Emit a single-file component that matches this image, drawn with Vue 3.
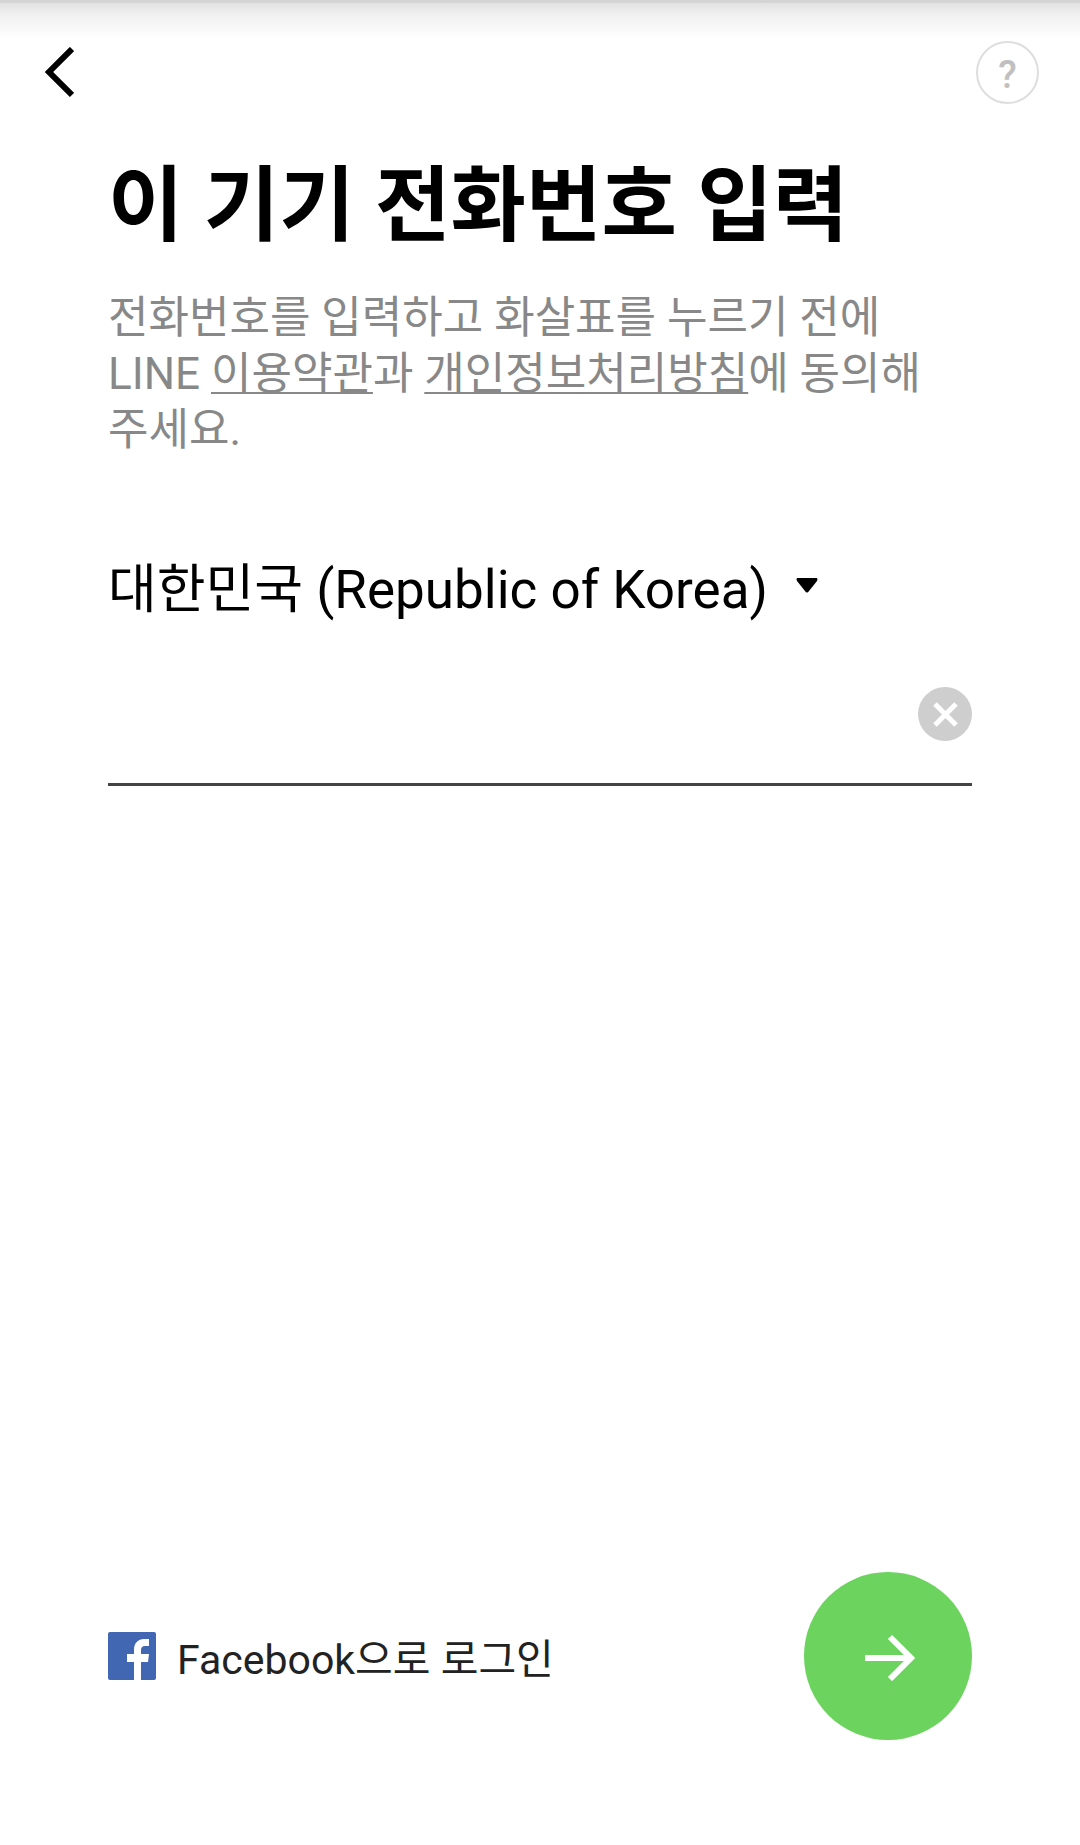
<script setup>
import { ref } from 'vue'

const country = ref('KR')
const phone = ref('')
</script>

<template>
  <div class="page">
    <header class="top">
      <button class="plain" type="button" aria-label="뒤로">
        <svg width="30" height="52" viewBox="0 0 30 52" fill="none" stroke="#000" stroke-width="6">
          <path d="M28 2 L5 25 L28 48" />
        </svg>
      </button>
      <button class="help" type="button" aria-label="도움말">?</button>
    </header>

    <main class="content">
      <h1>이 기기 전화번호 입력</h1>
      <p class="intro">
        전화번호를 입력하고 화살표를 누르기 전에 LINE
        <a href="#terms">이용약관</a>과 <a href="#privacy">개인정보처리방침</a>에 동의해 주세요.
      </p>

      <label class="country">
        <select v-model="country" aria-label="국가">
          <option value="KR">대한민국 (Republic of Korea)</option>
        </select>
        <svg width="22" height="24" viewBox="0 0 22 24" aria-hidden="true">
          <path d="M1 0 H21 Q22 1 21 3 L13 13 Q11 16 9 13 L1 3 Q0 1 1 0 Z" />
        </svg>
      </label>

      <div class="field">
        <input v-model="phone" type="tel" aria-label="전화번호" />
        <button class="plain" type="button" aria-label="지우기" @click="phone = ''">
          <svg width="54" height="54" viewBox="0 0 54 54">
            <circle cx="27" cy="27" r="27" fill="#cecece" />
            <path d="M17 17 L38 38 M38 17 L17 38" stroke="#fff" stroke-width="5" />
          </svg>
        </button>
      </div>
    </main>

    <footer class="bottom">
      <a class="facebook" href="#facebook">
        <svg width="48" height="48" viewBox="0 0 48 48" aria-hidden="true">
          <rect width="48" height="48" rx="2" fill="#4267b2" />
          <path
            d="M26 48 V30 H19 V22 H26 V18 C26 11 30 7 36 7 H41 V14 H37 C34 14 33 16 33 18 V22 H41 L40 30 H33 V48 Z"
            fill="#fff"
          />
        </svg>
        <span>Facebook으로 로그인</span>
      </a>
      <button class="next" type="button" aria-label="다음">
        <svg width="54" height="50" viewBox="0 0 54 50" fill="none" stroke="#fff" stroke-width="6">
          <path d="M4 27 H49 M29 6 L50 27 L29 48" />
        </svg>
      </button>
    </footer>
  </div>
</template>

<style>
body {
  margin: 0;
  background: #fff;
}
</style>

<style scoped>
.page {
  box-sizing: border-box;
  min-height: 100vh;
  display: flex;
  flex-direction: column;
  border-top: 3px solid #d4d4d4;
  background: linear-gradient(#e2e2e2, #f0f0f0 12px, #fff 36px) no-repeat #fff;
  font-family: Roboto, "Noto Sans CJK KR", sans-serif;
  color: #000;
  word-break: keep-all;
}

button {
  padding: 0;
  border: 0;
  background: none;
  font-family: inherit;
  cursor: pointer;
}

.plain {
  display: flex;
}

.top {
  display: flex;
  align-items: center;
  justify-content: space-between;
  padding: 38px 41px 0 44px;
}

.help {
  width: 63px;
  height: 63px;
  border: 2px solid #dedede;
  border-radius: 50%;
  color: #c0c0c0;
  font-size: 38px;
  font-weight: 500;
  line-height: 64px;
}

.content {
  padding: 42px 108px 0;
}

h1 {
  margin: 0;
  font-size: 82px;
  font-weight: 700;
  line-height: 120px;
}

.intro {
  margin: 24px 0 0;
  padding-right: 20px;
  font-size: 44px;
  line-height: 56px;
  color: #888;
}

.intro a {
  color: inherit;
  text-decoration: underline;
  text-decoration-thickness: 2px;
  text-underline-offset: 3px;
  text-decoration-skip-ink: none;
}

.country {
  display: flex;
  align-items: center;
  gap: 28px;
  margin-top: 92px;
}

select {
  appearance: none;
  padding: 0;
  border: 0;
  background: none;
  color: inherit;
  font-family: inherit;
  font-size: 53px;
  line-height: 80px;
}

.field {
  display: flex;
  align-items: center;
  margin-top: 44px;
  padding-bottom: 29px;
  border-bottom: 3px solid #444;
}

input {
  flex: 1;
  min-width: 0;
  height: 80px;
  padding: 0;
  border: 0;
  outline: 0;
  background: none;
  font-family: inherit;
  font-size: 53px;
}

.bottom {
  display: flex;
  align-items: center;
  justify-content: space-between;
  margin-top: auto;
  padding: 40px 108px 105px;
}

.facebook {
  display: flex;
  align-items: center;
  gap: 21px;
  color: #222;
  font-size: 41px;
  text-decoration: none;
}

.next {
  display: flex;
  align-items: center;
  justify-content: center;
  width: 168px;
  height: 168px;
  border-radius: 50%;
  background: #6bd35e;
}
</style>
